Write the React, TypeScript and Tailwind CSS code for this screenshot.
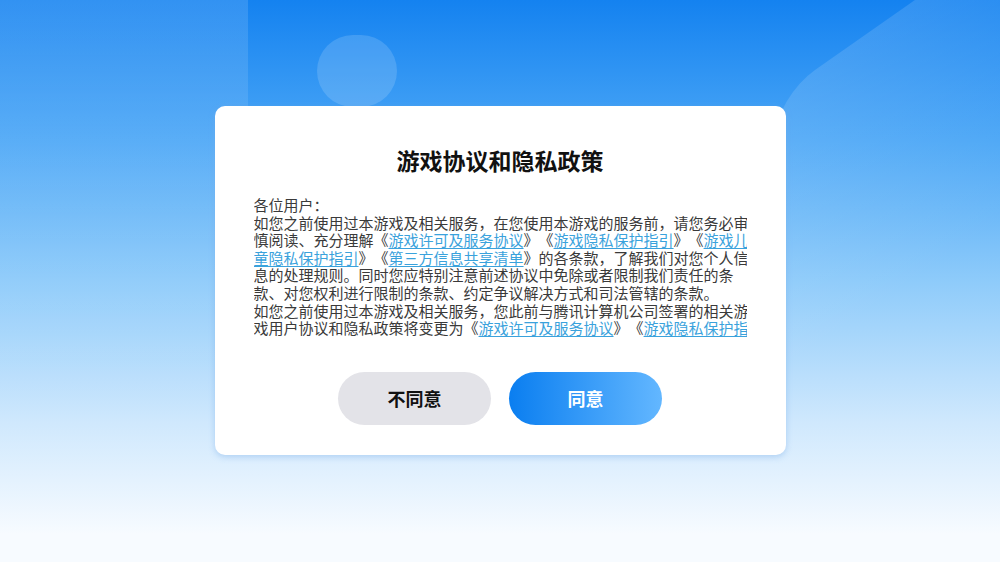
import React from 'react'

const cjk = { fontFamily: '"Noto Sans CJK SC", "Noto Sans", sans-serif' }

const Link = ({ children }: { children: React.ReactNode }) => (
    <a href="#" className="text-[#3aa2dc] underline underline-offset-2 decoration-1">
        {children}
    </a>
)

// each row of the agreement is laid out as its own line, the box only shows eight
const lines: React.ReactNode[] = [
    <>各位用户：</>,
    <>如您之前使用过本游戏及相关服务，在您使用本游戏的服务前，请您务必审</>,
    <>慎阅读、充分理解《<Link>游戏许可及服务协议</Link>》《<Link>游戏隐私保护指引</Link>》《<Link>游戏儿</Link></>,
    <><Link>童隐私保护指引</Link>》《<Link>第三方信息共享清单</Link>》的各条款，了解我们对您个人信</>,
    <>息的处理规则。同时您应特别注意前述协议中免除或者限制我们责任的条</>,
    <>款、对您权利进行限制的条款、约定争议解决方式和司法管辖的条款。</>,
    <>如您之前使用过本游戏及相关服务，您此前与腾讯计算机公司签署的相关游</>,
    <>戏用户协议和隐私政策将变更为《<Link>游戏许可及服务协议</Link>》《<Link>游戏隐私保护指</Link></>,
]

const App = () => {
    return (
        <div
            className="relative w-[1000px] h-[562px] overflow-hidden bg-[linear-gradient(180deg,#1482f0_0%,#4aa6f6_25%,#8ecbfa_50%,#cfe8fd_75%,#f7fbff_95%)]"
            style={cjk}
        >
            {/* background decorations */}
            <div className="absolute left-0 top-0 w-[248px] h-[420px] bg-[linear-gradient(180deg,rgba(255,255,255,0.13),rgba(255,255,255,0.04)_70%,rgba(255,255,255,0))]" />
            <div className="absolute left-[317px] top-[35px] w-[80px] h-[72px] rounded-full bg-white/15" />
            <div className="absolute left-[775px] top-[98px] w-[280px] h-[380px] rounded-[40px] -skew-y-[35deg] origin-top-left bg-[linear-gradient(180deg,rgba(255,255,255,0.13),rgba(255,255,255,0.06)_40%,rgba(255,255,255,0)_75%)]" />

            <div className="relative flex h-full items-start justify-center pt-[106px]">
                <div className="w-[571px] rounded-[10px] bg-white shadow-[0_2px_6px_rgba(120,170,230,0.45)] pt-[39px] pb-[30px] px-[39px] flex flex-col">
                    <h1 className="text-center text-[23px] leading-[30px] font-bold text-[#111]">
                        游戏协议和隐私政策
                    </h1>

                    <div className="mt-[21px] h-[141px] overflow-hidden text-[15px] leading-[17.6px] text-[#3a3a3a] [text-spacing-trim:space-all]">
                        {lines.map((line, i) => (
                            <div key={i} className="whitespace-nowrap">{line}</div>
                        ))}
                    </div>

                    <div className="mt-[35px] flex justify-center gap-[18px]">
                        <button className="w-[153px] h-[53px] rounded-full bg-[#e3e3e8] text-[18px] font-bold text-[#111]">
                            不同意
                        </button>
                        <button className="w-[153px] h-[53px] rounded-full bg-[linear-gradient(90deg,#0a7ef0,#63b7ff)] text-[18px] font-bold text-white">
                            同意
                        </button>
                    </div>
                </div>
            </div>
        </div>
    )
}

export default App
